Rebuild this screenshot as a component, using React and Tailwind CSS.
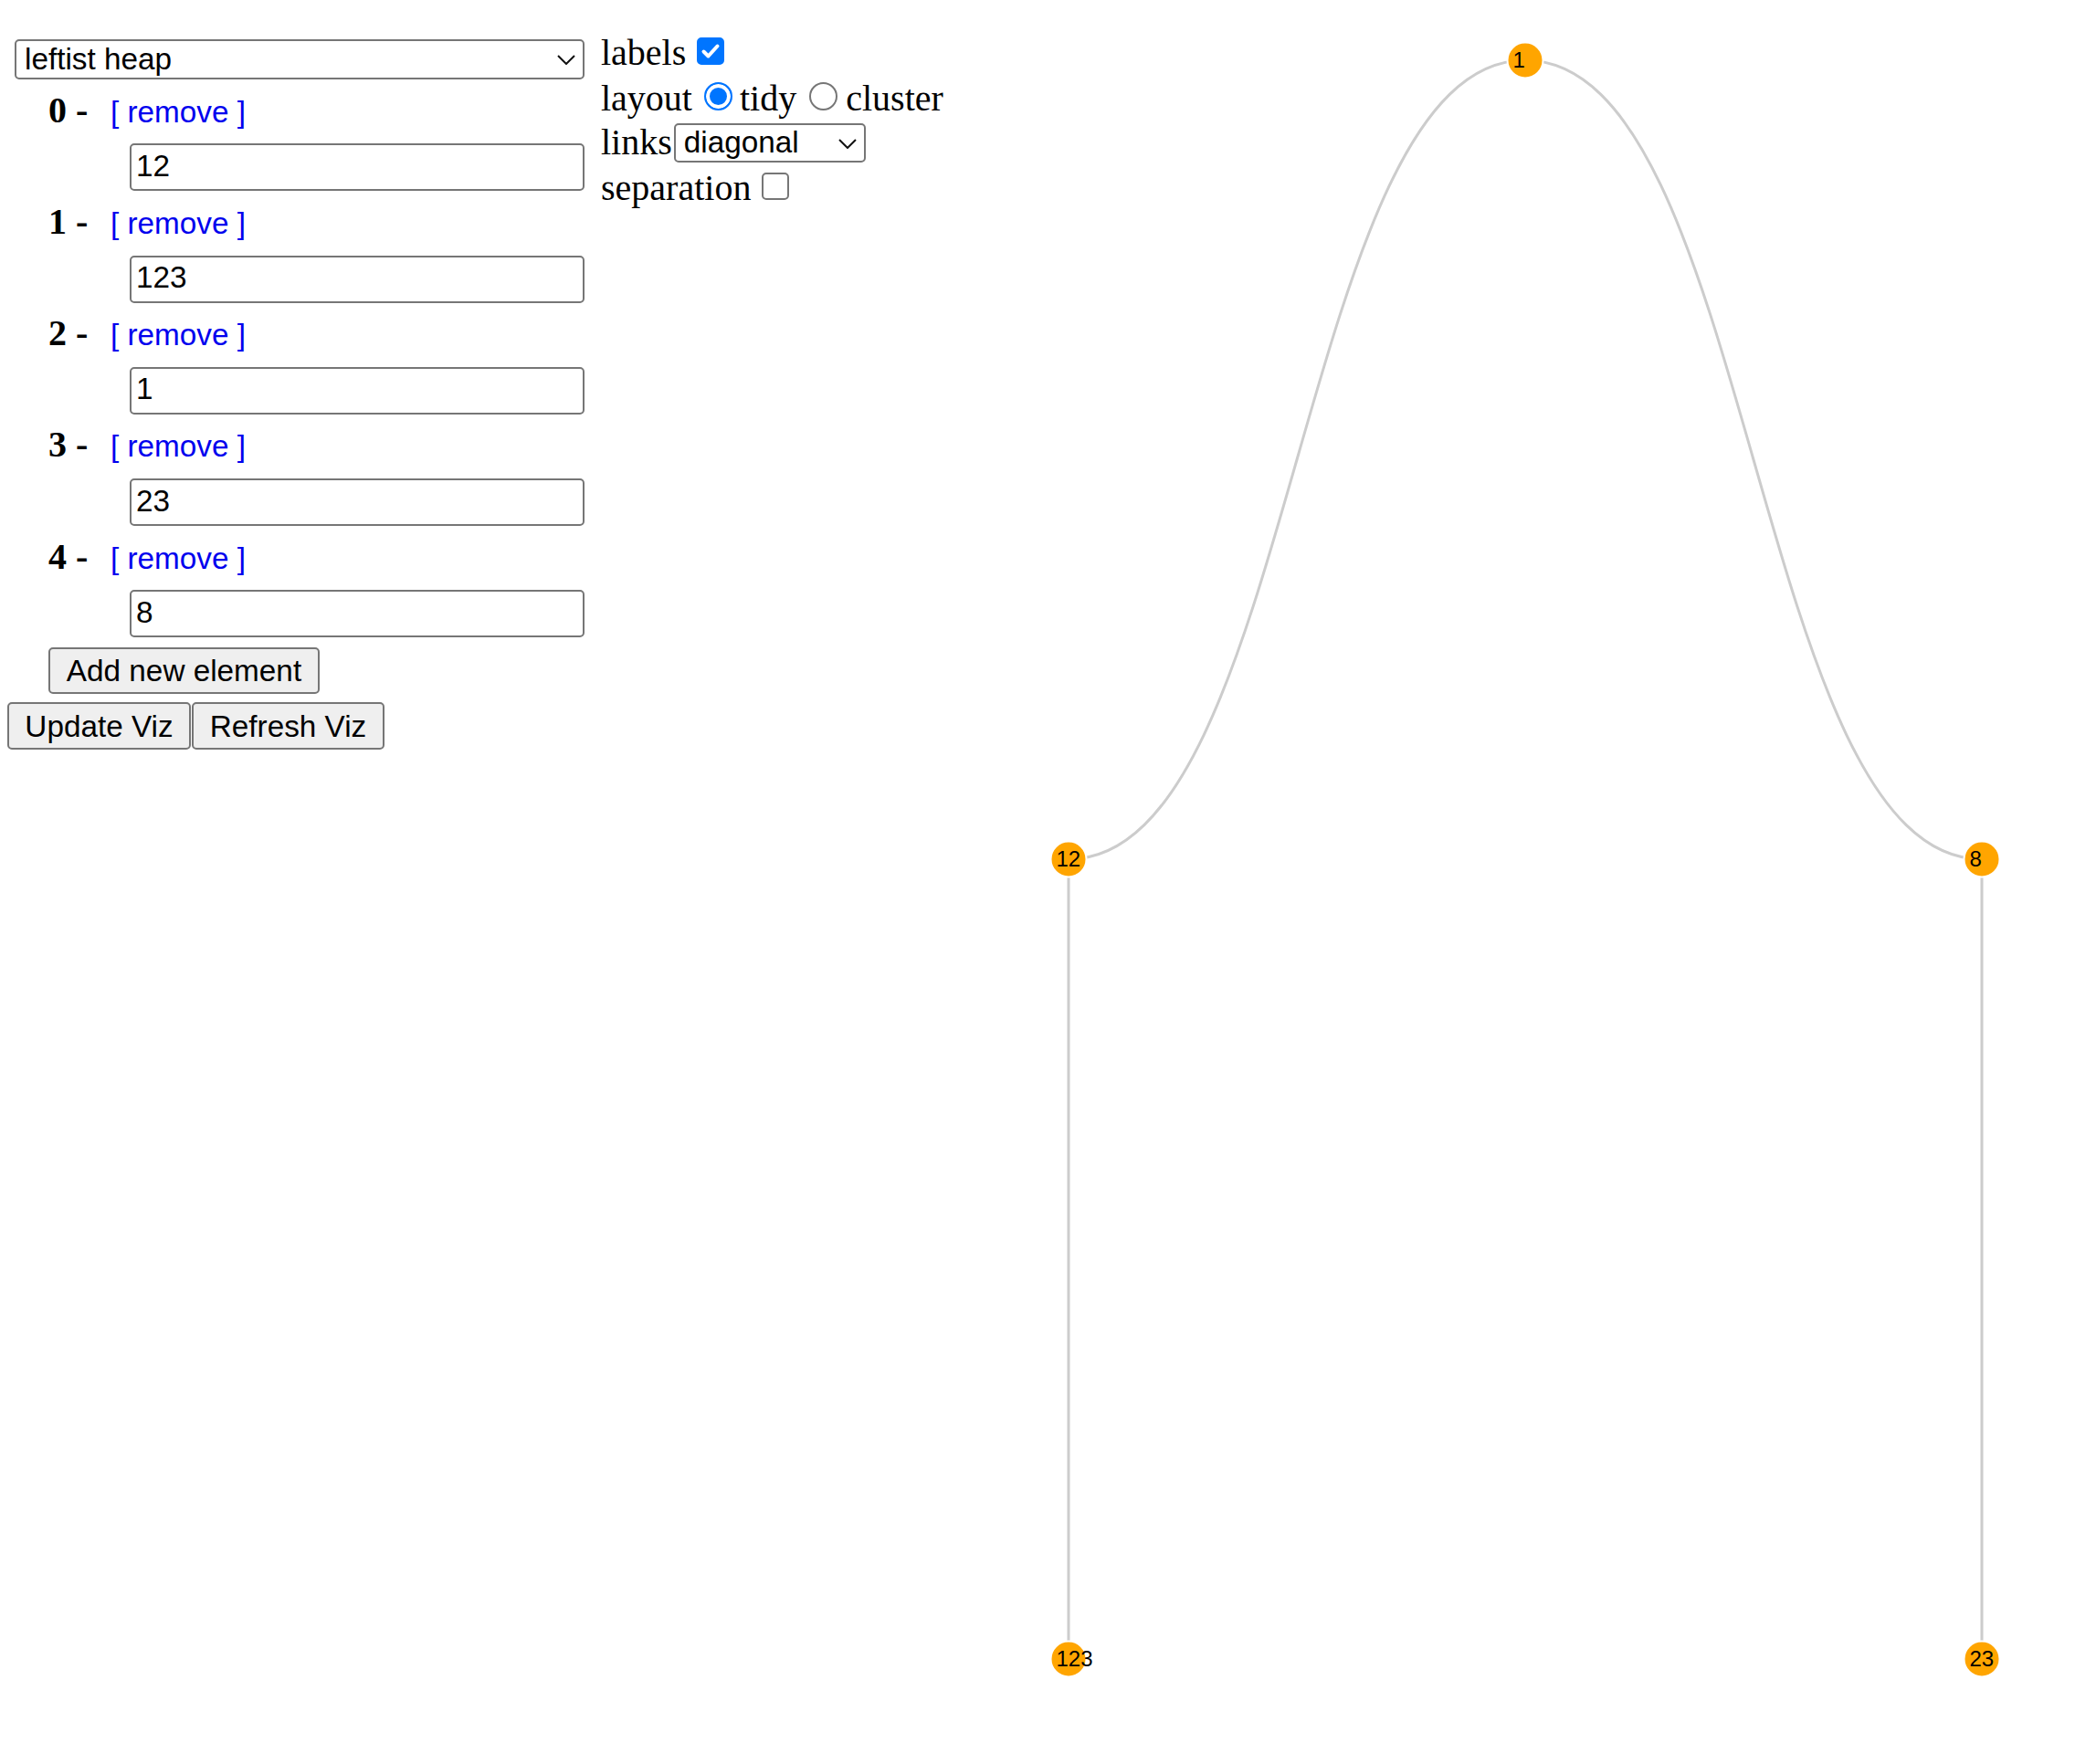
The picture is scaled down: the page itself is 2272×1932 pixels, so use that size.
import React, { useState } from 'react';

const Chevron = ({ className }) => (
    <svg className={className} width="20" height="11" viewBox="0 0 20 11" fill="none">
        <path d="M1 1 L10 10 L19 1" stroke="#111" strokeWidth="2" />
    </svg>
);

const Checkbox = ({ checked, onChange }) => (
    <span className="relative ml-[12px] mb-[2px] w-[30px] h-[30px]">
        <input
            type="checkbox"
            checked={checked}
            onChange={onChange}
            className="peer block appearance-none m-0 w-[30px] h-[30px] rounded-[5px] border-[2.5px] border-[#767676] bg-white checked:border-[#0075ff] checked:bg-[#0075ff]"
        />
        <svg
            className="absolute left-0 top-0 hidden peer-checked:block pointer-events-none"
            width="30"
            height="30"
            viewBox="0 0 30 30"
            fill="none"
        >
            <path d="M7.5 15.5 L12.5 20.5 L22.5 9.5" stroke="#fff" strokeWidth="4" strokeLinecap="round" strokeLinejoin="round" />
        </svg>
    </span>
);

const Radio = ({ checked, onChange, className }) => (
    <input
        type="radio"
        name="layout"
        checked={checked}
        onChange={onChange}
        className={`appearance-none m-0 mb-[1px] w-[31px] h-[31px] rounded-full border-[2.5px] border-[#767676] bg-white checked:border-[#0075ff] checked:bg-[#0075ff] checked:shadow-[inset_0_0_0_4px_white] ${className}`}
    />
);

// node positions inside the svg (the svg starts at x = 1040)
const nodes = [
    { id: 'n1', label: '1', x: 630, y: 66 },
    { id: 'n12', label: '12', x: 130, y: 941 },
    { id: 'n8', label: '8', x: 1130, y: 941 },
    { id: 'n123', label: '123', x: 130, y: 1817 },
    { id: 'n23', label: '23', x: 1130, y: 1817 },
];

const links = [
    ['n1', 'n12'],
    ['n1', 'n8'],
    ['n12', 'n123'],
    ['n8', 'n23'],
];

const diagonal = (s, t) => {
    const mx = (s.x + t.x) / 2;
    return `M${s.x},${s.y}C${mx},${s.y} ${mx},${t.y} ${t.x},${t.y}`;
};

const Tree = () => {
    const byId = Object.fromEntries(nodes.map((n) => [n.id, n]));
    return (
        <svg width="1232" height="1900" className="shrink-0">
            {links.map(([a, b]) => (
                <path key={a + b} d={diagonal(byId[a], byId[b])} fill="none" stroke="#ccc" strokeWidth="3" />
            ))}
            {nodes.map((n) => (
                <g key={n.id}>
                    <circle cx={n.x} cy={n.y} r="19.5" fill="#ffa500" stroke="#fff" strokeWidth="2" />
                    <text
                        x={n.x - 13.5}
                        y={n.y + 8}
                        fontSize="24"
                        fontFamily="'Liberation Sans', Arial, sans-serif"
                        fill="#000"
                    >
                        {n.label}
                    </text>
                </g>
            ))}
        </svg>
    );
};

const App = () => {
    const [elements, setElements] = useState(['12', '123', '1', '23', '8']);
    const [labels, setLabels] = useState(true);
    const [layout, setLayout] = useState('tidy');
    const [separation, setSeparation] = useState(false);

    const sans = "font-['Liberation_Sans',Arial,sans-serif] text-[33.3px] text-black";

    return (
        <div className="flex items-start bg-white text-black font-['Liberation_Serif','Times_New_Roman',serif] text-[40px] min-h-[1932px]">
            {/* left column: structure + values */}
            <div className="flex flex-col items-start pl-[8px] w-[640px] shrink-0">
                <div className="relative mt-[43px] ml-[8px]">
                    <select
                        defaultValue="leftist heap"
                        className={`${sans} block appearance-none w-[624px] h-[44px] border-2 border-[#767676] rounded-[5px] pl-[9px] bg-white leading-[38px]`}
                    >
                        <option>leftist heap</option>
                        <option>binary heap</option>
                        <option>binomial heap</option>
                    </select>
                    <Chevron className="absolute right-[10px] top-[17px] pointer-events-none" />
                </div>

                {elements.map((v, i) => (
                    <div key={i} className="flex flex-col items-start">
                        <div className="flex items-baseline h-[70.25px] pt-[11.5px] leading-[44px] ml-[45px]">
                            <span className="font-bold w-[68px]">{i} -</span>
                            <a
                                href="#"
                                className="font-['Liberation_Sans',Arial,sans-serif] text-[33.3px] text-[#0000ee]"
                                onClick={(e) => {
                                    e.preventDefault();
                                    setElements(elements.filter((_, j) => j !== i));
                                }}
                            >
                                [ remove ]
                            </a>
                        </div>
                        <input
                            type="text"
                            value={v}
                            onChange={(e) => setElements(elements.map((x, j) => (j === i ? e.target.value : x)))}
                            className={`${sans} block ml-[134px] w-[498px] h-[52px] border-2 border-[#767676] rounded-[5px] pl-[5px] pb-[3px] outline-none`}
                        />
                    </div>
                ))}

                <button
                    onClick={() => setElements([...elements, ''])}
                    className={`${sans} block mt-[11px] ml-[45px] w-[297px] h-[51px] bg-[#efefef] border-2 border-[#767676] rounded-[5px] leading-none`}
                >
                    Add new element
                </button>
                <div className="flex mt-[9px]">
                    <button className={`${sans} w-[201px] h-[52px] bg-[#efefef] border-2 border-[#767676] rounded-[5px] leading-none`}>
                        Update Viz
                    </button>
                    <button className={`${sans} ml-[1px] w-[211px] h-[52px] bg-[#efefef] border-2 border-[#767676] rounded-[5px] leading-none`}>
                        Refresh Viz
                    </button>
                </div>
            </div>

            {/* options */}
            <div className="flex flex-col ml-[18px] pt-[33px] w-[382px] shrink-0 leading-[49px]">
                <div className="flex items-baseline h-[50px]">
                    <span>labels</span>
                    <Checkbox checked={labels} onChange={() => setLabels(!labels)} />
                </div>
                <div className="flex items-baseline h-[48px]">
                    <span>layout</span>
                    <Radio checked={layout === 'tidy'} onChange={() => setLayout('tidy')} className="ml-[13px]" />
                    <span className="ml-[8px]">tidy</span>
                    <Radio checked={layout === 'cluster'} onChange={() => setLayout('cluster')} className="ml-[14px]" />
                    <span className="ml-[9px]">cluster</span>
                </div>
                <div className="flex items-baseline h-[50px]">
                    <span>links</span>
                    <div className="relative ml-[2px] self-center">
                        <select
                            defaultValue="diagonal"
                            className={`${sans} block appearance-none w-[210px] h-[43px] border-2 border-[#767676] rounded-[5px] pl-[9px] bg-white leading-[38px]`}
                        >
                            <option>diagonal</option>
                            <option>elbow</option>
                            <option>line</option>
                        </select>
                        <Chevron className="absolute right-[10px] top-[17px] pointer-events-none" />
                    </div>
                </div>
                <div className="flex items-baseline h-[49px]">
                    <span>separation</span>
                    <Checkbox checked={separation} onChange={() => setSeparation(!separation)} />
                </div>
            </div>

            <Tree />
        </div>
    );
};

export default App;
